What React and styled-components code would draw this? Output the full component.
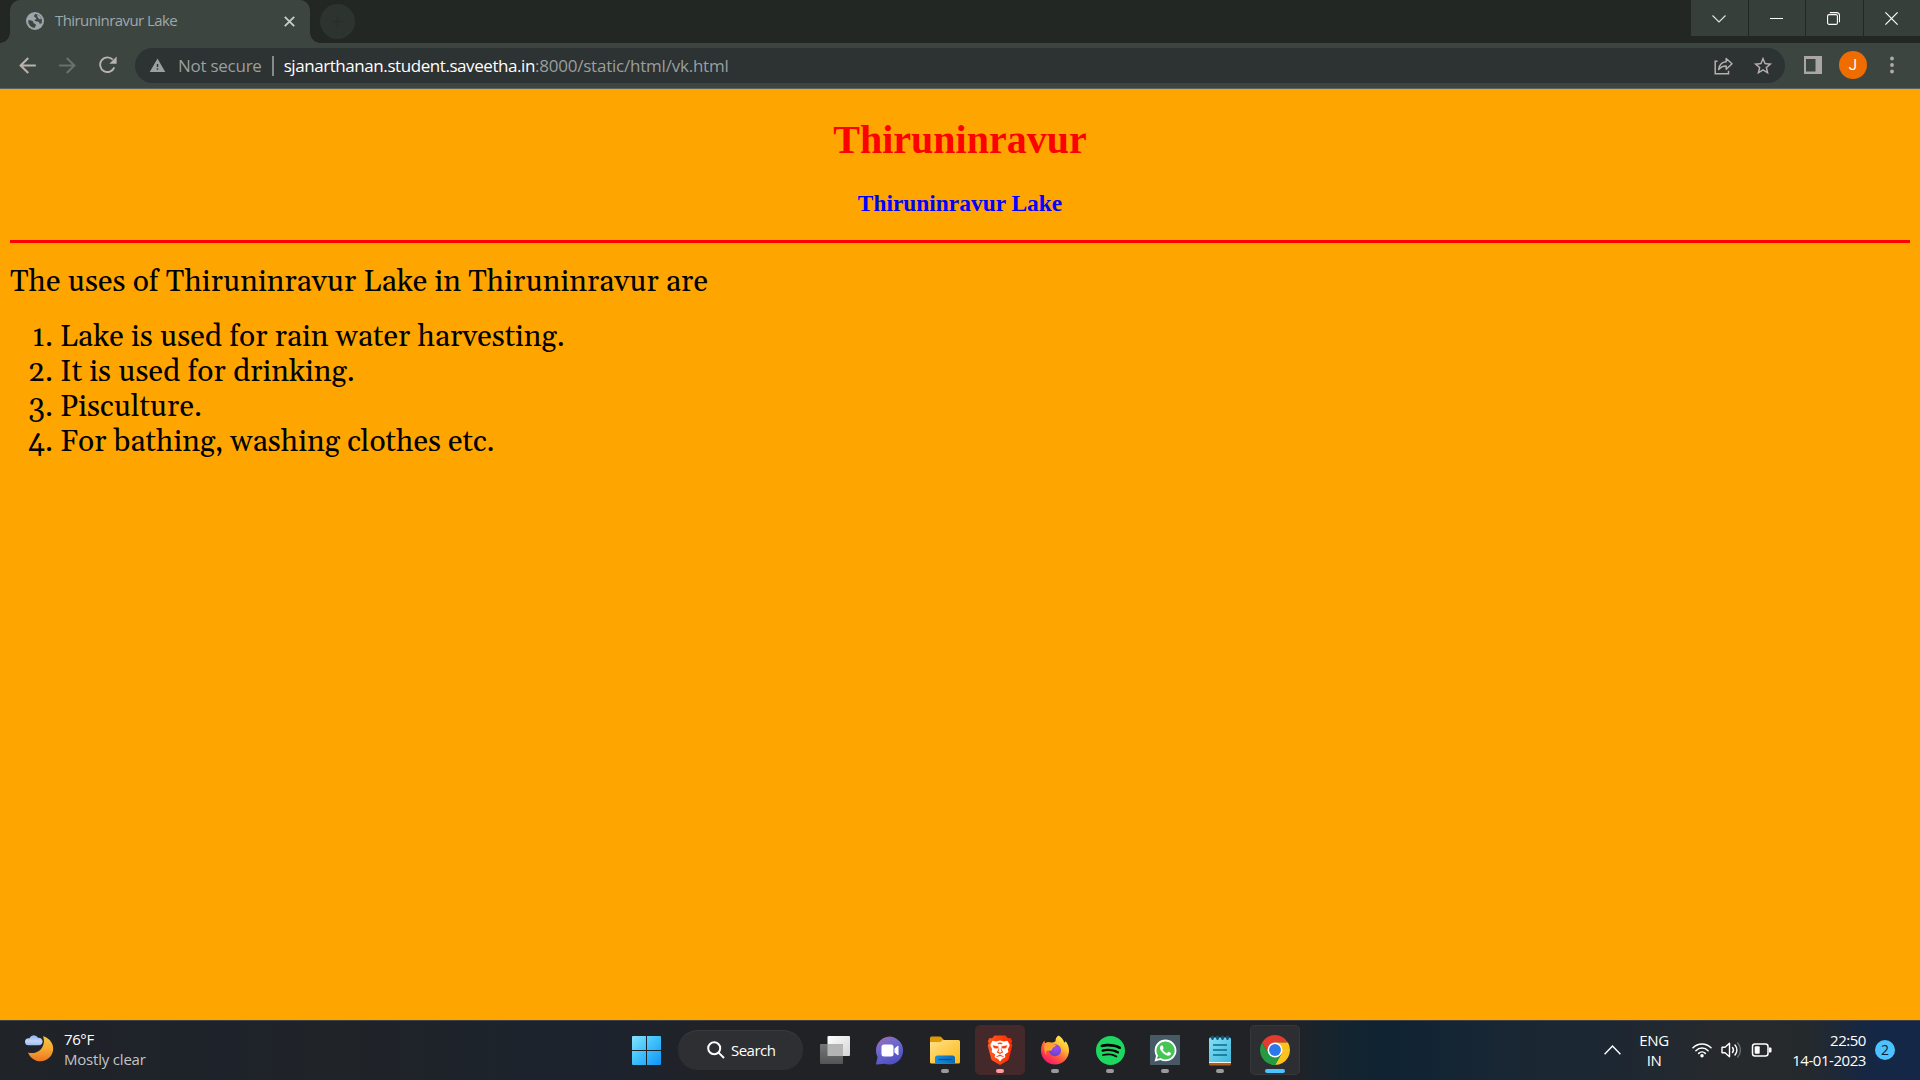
import React from "react";
import styled, { createGlobalStyle } from "styled-components";
import {
  MdArrowBack,
  MdArrowForward,
  MdStarBorder,
  MdWarning,
} from "react-icons/md";
import { SiSpotify } from "react-icons/si";
import { FaWhatsapp } from "react-icons/fa";

const uiFont = `"Segoe UI", "Open Sans", "Noto Sans", sans-serif`;

const GlobalStyle = createGlobalStyle`
  * { box-sizing: border-box; }
  body { margin: 0; overflow: hidden; }
  svg { display: block; flex: none; }
`;

const Screen = styled.div`
  width: 1920px;
  height: 1080px;
  display: flex;
  flex-direction: column;
  overflow: hidden;
  background: orange;
  font-family: ${uiFont};
`;

/* Browser chrome */

const TabStrip = styled.header`
  height: 43px;
  flex: none;
  display: flex;
  align-items: flex-start;
  padding-left: 10px;
  background: #222724;
`;

const Tab = styled.div`
  position: relative;
  width: 300px;
  height: 43px;
  display: flex;
  align-items: center;
  padding: 0 15px 1px 16px;
  border-radius: 10px 10px 0 0;
  background: #3c4540;
  color: #9fa8ac;

  &::before,
  &::after {
    content: "";
    position: absolute;
    bottom: 0;
    width: 10px;
    height: 10px;
  }
  &::before {
    left: -10px;
    background: radial-gradient(circle at 0 0, transparent 9.5px, #3c4540 10px);
  }
  &::after {
    right: -10px;
    background: radial-gradient(circle at 100% 0, transparent 9.5px, #3c4540 10px);
  }
`;

const TabTitle = styled.span`
  flex: 1;
  margin: 0 0 2px 11px;
  font-size: 15px;
  line-height: 20px;
  letter-spacing: -0.57px;
  white-space: nowrap;
`;

const NewTab = styled.div`
  width: 35px;
  height: 35px;
  margin: 4px 0 0 10px;
  display: grid;
  place-items: center;
  border-radius: 50%;
  background: #2d3430;
`;

const WindowButtons = styled.div`
  margin-left: auto;
  display: flex;
  gap: 1px;
`;

const WindowButton = styled.div`
  width: ${(p) => p.$width}px;
  height: 36px;
  display: grid;
  place-items: center;
  padding: 1px 2px 0 0;
  background: #363f3a;
`;

const Toolbar = styled.div`
  height: 46px;
  flex: none;
  display: flex;
  align-items: center;
  padding: 0 16px 0 15px;
  border-bottom: 1px solid #5a625e;
  background: #3c4540;
`;

const NavButton = styled.div`
  width: 40px;
  height: 40px;
  display: flex;
  align-items: center;
  padding-bottom: 1px;
  color: ${(p) => (p.$disabled ? "#6b716d" : "#b9b3ae")};
`;

const AddressBar = styled.div`
  width: 1650px;
  height: 35px;
  display: flex;
  align-items: center;
  padding: 0 11px 0 14px;
  border-radius: 18px;
  background: #2d3232;
  color: #9a9f9f;
  font-size: 17px;
  line-height: 24px;
  white-space: nowrap;
`;

const Security = styled.span`
  margin-left: 12px;
  letter-spacing: -0.26px;
`;

const Divider = styled.span`
  width: 2px;
  height: 20px;
  margin: 0 10px 0 10px;
  background: #858989;
`;

const Host = styled.span`
  color: #fff;
  letter-spacing: -0.43px;
`;

const Path = styled.span`
  letter-spacing: -0.22px;
`;

const AddressActions = styled.div`
  margin-left: auto;
  display: flex;
  align-items: center;
  gap: 18px;
  color: #b5b0ad;
`;

const ToolbarActions = styled.div`
  flex: 1;
  display: flex;
  align-items: center;
  padding: 0 0 1px 19px;
`;

const Avatar = styled.div`
  width: 28px;
  height: 28px;
  margin: 0 23px 0 17px;
  border-radius: 50%;
  background: #ef6c00;
  color: #fff;
  font: 400 15px/28px Roboto, sans-serif;
  text-align: center;
`;

/* Page */

const Page = styled.main`
  flex: 1;
  padding: 0 10px;
  background: orange;
  color: #000;
  overflow: hidden;
`;

const Title = styled.h1`
  margin: 28px 0 26px;
  color: red;
  font: bold 40px/46px "Liberation Serif", serif;
  text-align: center;
`;

const Subtitle = styled.h3`
  margin: 0 0 23px;
  color: blue;
  font: bold 23.4px/28px "Liberation Serif", serif;
  text-align: center;
`;

const Rule = styled.hr`
  height: 3px;
  margin: 0;
  border: 0;
  background: red;
`;

const Intro = styled.p`
  margin: 22px 0 20px;
  font: 30px/35px Gelasio, Georgia, "Liberation Serif", serif;
`;

const Uses = styled.ol`
  margin: 0;
  padding: 0;
  list-style: none;
  font: 30px/35px Gelasio, Georgia, "Liberation Serif", serif;
`;

const Use = styled.li`
  display: flex;
`;

const Marker = styled.span`
  width: 50px;
  padding-right: 7px;
  text-align: right;
  font-variant-numeric: oldstyle-nums;
`;

/* Taskbar */

const Taskbar = styled.footer`
  height: 60px;
  flex: none;
  display: grid;
  grid-template-columns: 621px 1fr 340px;
  border-top: 1px solid #3e4147;
  background: linear-gradient(
    90deg,
    #202328 0,
    #1e232b 220px,
    #202328 330px,
    #1c232e 600px,
    #212226 720px,
    #212226 1290px,
    #14242f 1340px,
    #0f2333 1390px,
    #1a2733 1520px,
    #1c2733 1600px,
    #272a2c 1730px,
    #24292d 1810px,
    #152745 1870px,
    #142747 1920px
  );
  color: #fff;
  font-size: 15px;
`;

const Weather = styled.div`
  display: flex;
  padding: 8px 0 0 24px;
  gap: 10px;
`;

const WeatherGlyph = styled.div`
  padding-top: 4px;
`;

const WeatherText = styled.div`
  display: flex;
  flex-direction: column;
  line-height: 20px;
  letter-spacing: -0.4px;
`;

const Muted = styled.span`
  color: #c3c3c5;
  letter-spacing: -0.2px;
`;

const Apps = styled.div`
  display: flex;
  align-items: center;
  gap: 5px;
`;

const AppButton = styled.div`
  width: 50px;
  height: 50px;
  margin-top: -1px;
  display: grid;
  grid-template-rows: 44px 6px;
  justify-items: center;
  align-items: center;
  border-radius: 5px;
  background: ${(p) => p.$tint || "transparent"};
  box-shadow: ${(p) => (p.$active ? "inset 0 0 0 1px #36373b" : "none")};
`;

const IconBox = styled.div`
  display: grid;
  place-items: center;
  padding-top: 6px;
`;

const Indicator = styled.span`
  width: ${(p) => (p.$wide ? 20 : 8)}px;
  height: 4px;
  margin-top: -2px;
  border-radius: 2px;
  background: ${(p) => p.$color};
`;

const Search = styled.div`
  width: 125px;
  height: 40px;
  margin: -1px 2px 0;
  display: flex;
  align-items: center;
  gap: 6px;
  padding: 0 0 0 29px;
  border-radius: 20px;
  background: #2e2f33;
  box-shadow: inset 0 1px 0 #393a3e;
  letter-spacing: -0.52px;
`;

const Tray = styled.div`
  display: flex;
  align-items: center;
  padding: 0 25px 1px 24px;
  line-height: 20px;
`;

const Language = styled.div`
  width: 30px;
  margin: 0 0 1px 18px;
  text-align: center;
  letter-spacing: -0.4px;
`;

const StatusIcons = styled.div`
  margin-left: 23px;
  display: flex;
  align-items: center;
  gap: 9px;
`;

const Clock = styled.div`
  margin: 0 0 1px auto;
  text-align: right;
  letter-spacing: -0.45px;
`;

const Badge = styled.div`
  width: 20px;
  height: 20px;
  margin-left: 9px;
  border-radius: 50%;
  background: #4cc2ff;
  color: #10202c;
  font-size: 14px;
  line-height: 19px;
  text-align: center;
`;

/* Icons */

const GlobeIcon = () => (
  <svg width="18" height="18" viewBox="0 0 18 18">
    <circle cx="9" cy="9" r="9" fill="#9da5aa" />
    <path fill="#3c4540" d="M9.300 2.100c-.9.900-1.600 1.700-1 2.600.5.800 1.800.4 2 1.500.2 1.300-1.400 1.100-1.700 2.100-.2.900.8 1.100 2 1.100 1.600 0 2.900.6 2.700 2.200l2 .2A6.900 6.900 0 0 0 9.300 2.100z" opacity=".95" />
    <path fill="#9da5aa" d="M11 2.800c1.700.3 3.500 1.800 4.200 3.700-.8.900-2 .8-2.500 0-.5-1-1.700-1.700-1.700-3.700z" />
    <path fill="#3c4540" d="M2.200 8.200c1.500-.2 3.500 0 4.600 1 .8.900.4 1.900 1.500 2.300 1 .3 1.800.7 1.500 1.900-.3 1-1 1.300-1.100 2.500A6.900 6.900 0 0 1 2.200 8.200z" />
  </svg>
);

const CloseTab = () => (
  <svg width="11" height="11" viewBox="0 0 11 11" stroke="#c6cbcb" strokeWidth="1.900">
    <path d="m.8.8 9.400 9.400M10.200.8.8 10.200" />
  </svg>
);

const PlusIcon = () => (
  <svg width="13" height="13" viewBox="0 0 13 13" stroke="#29302c" strokeWidth="2">
    <path d="M6.500 0v13M0 6.500h13" />
  </svg>
);

const ReloadIcon = () => (
  <svg width="19" height="18" viewBox="0 0 19 18">
    <path d="M15.300 11.300A7.300 7.300 0 1 1 13.800 3.700" fill="none" stroke="currentColor" strokeWidth="1.900" />
    <path d="M17.600.6v7.200h-7.200z" fill="currentColor" />
  </svg>
);

const ChevronDown = () => (
  <svg width="14" height="8" viewBox="0 0 14 8" fill="none" stroke="#e4e6e5" strokeWidth="1.100">
    <path d="M.5.5 7 7 13.500.5" />
  </svg>
);

const Minimize = () => (
  <svg width="13" height="1" viewBox="0 0 13 1">
    <path d="M0 0h13v1H0z" fill="#fff" />
  </svg>
);

const Restore = () => (
  <svg width="13" height="13" viewBox="0 0 13 13" fill="none" stroke="#fff" strokeWidth="1.100">
    <rect x=".6" y="2.600" width="9.800" height="9.800" rx="1.500" />
    <path d="M2.800.6h7a2.700 2.700 0 0 1 2.700 2.700v7" />
  </svg>
);

const CloseWindow = () => (
  <svg width="13" height="13" viewBox="0 0 13 13" stroke="#fff" strokeWidth="1.200">
    <path d="m.4.4 12.200 12.200M12.600.4.4 12.600" />
  </svg>
);

const ShareIcon = () => (
  <svg width="20" height="18" viewBox="0 0 20 18" fill="none" stroke="currentColor" strokeWidth="1.500">
    <path d="M3.500 4.300H1.200v12.500h13.300v-3" />
    <path d="M12.200 1.500v3.200C7.700 5 5.200 8 4.600 12.600c1.900-2.600 4.300-3.700 7.600-3.700v3.300L18 6.700z" strokeLinejoin="round" />
  </svg>
);

const SidePanelIcon = () => (
  <svg width="18" height="18" viewBox="0 0 18 18" fill="#aaa6a6">
    <path fillRule="evenodd" d="M0 0h18v18H0zM2 3v12.500h9.500V3z" />
  </svg>
);

const MenuDots = () => (
  <svg width="4" height="18" viewBox="0 0 4 18" fill="#b0aaa8">
    <circle cx="2" cy="2.500" r="1.900" />
    <circle cx="2" cy="9" r="1.900" />
    <circle cx="2" cy="15.500" r="1.900" />
  </svg>
);

const WeatherIcon = () => (
  <svg width="30" height="30" viewBox="0 0 30 30">
    <defs>
      <linearGradient id="moon" x1="0" y1="0" x2="0" y2="1">
        <stop offset="0" stopColor="#f5c63c" />
        <stop offset=".5" stopColor="#f6a932" />
        <stop offset="1" stopColor="#ee7420" />
      </linearGradient>
      <linearGradient id="cloud" x1="0" y1="0" x2="0" y2="1">
        <stop offset="0" stopColor="#8fb2ee" />
        <stop offset=".6" stopColor="#c3d5f6" />
        <stop offset="1" stopColor="#9fbdf0" />
      </linearGradient>
    </defs>
    <path fill="url(#moon)" d="M19 3.200c5 .9 10.200 6 10.200 12.300 0 7.200-5.700 12.700-12.700 12.700-5.700 0-10.700-3.700-12.500-8.800 4 1.300 9 .5 12.200-2.500 3.700-3.400 4.700-9 2.800-13.700z" />
    <path fill="url(#cloud)" d="M4.500 12.200a3.500 3.500 0 0 1 0-7c.3 0 .6 0 .9.100A4.700 4.700 0 0 1 14 4.700c2.600-.3 4.600 1.500 4.600 3.800 0 2.100-1.500 3.700-3.700 3.700z" />
  </svg>
);

const StartIcon = () => (
  <svg width="30" height="30" viewBox="0 0 30 30">
    <defs>
      <linearGradient id="start" x1="0" y1="0" x2="30" y2="30" gradientUnits="userSpaceOnUse">
        <stop offset="0" stopColor="#8be4ff" />
        <stop offset=".5" stopColor="#3fc0fb" />
        <stop offset="1" stopColor="#0f94f8" />
      </linearGradient>
    </defs>
    <path fill="url(#start)" d="M2 1h13v14H1V2a1 1 0 0 1 1-1zM16 1h13a1 1 0 0 1 1 1v13H16zM1 16h14v14H2a1 1 0 0 1-1-1zM16 16h14v13a1 1 0 0 1-1 1H16z" />
  </svg>
);

const SearchIcon = () => (
  <svg width="18" height="18" viewBox="0 0 18 18" fill="none" stroke="#fff" strokeWidth="2">
    <circle cx="7.200" cy="7.200" r="6" />
    <path d="m11.600 11.600 5.400 5.400" />
  </svg>
);

const TaskViewIcon = () => (
  <svg width="30" height="28" viewBox="0 0 30 28">
    <defs>
      <linearGradient id="tvFront" x1="0" y1="0" x2="1" y2="1">
        <stop offset="0" stopColor="#fff" />
        <stop offset="1" stopColor="#d4d4d4" />
      </linearGradient>
      <linearGradient id="tvBack" x1="0" y1="0" x2="0" y2="1">
        <stop offset="0" stopColor="#767676" />
        <stop offset="1" stopColor="#555" />
      </linearGradient>
    </defs>
    <rect x="7.500" width="22.500" height="20" rx="1" fill="url(#tvFront)" />
    <rect y="8" width="23" height="20" rx="1" fill="url(#tvBack)" />
    <path d="M7.500 8H22a1 1 0 0 1 1 1v11H7.500z" fill="#b4b4b4" />
  </svg>
);

const ChatIcon = () => (
  <svg width="30" height="29" viewBox="0 0 30 29">
    <defs>
      <linearGradient id="chat" x1=".1" y1="0" x2=".6" y2="1">
        <stop offset="0" stopColor="#a06cb4" />
        <stop offset=".45" stopColor="#6b68cf" />
        <stop offset="1" stopColor="#4f4fc4" />
      </linearGradient>
    </defs>
    <path fill="url(#chat)" d="M15 .5a14 14 0 1 1-5.500 27.200L2 28.600c-.7.100-1.100-.4-.9-1l1.500-6.500A14 14 0 0 1 15 .5z" />
    <rect x="6.500" y="8.500" width="12" height="12" rx="2.500" fill="#fff" />
    <path fill="#fff" d="m19.500 12.500 3-2.500c.5-.4 1-.1 1 .5v8c0 .6-.5.900-1 .5l-3-2.500z" />
  </svg>
);

const FolderIcon = () => (
  <svg width="30" height="28" viewBox="0 0 30 28">
    <defs>
      <linearGradient id="folder" x1="0" y1="0" x2="1" y2="1">
        <stop offset="0" stopColor="#ffe08a" />
        <stop offset="1" stopColor="#fdb913" />
      </linearGradient>
      <linearGradient id="folderTray" x1="0" y1="0" x2="1" y2="0">
        <stop offset="0" stopColor="#1490df" />
        <stop offset="1" stopColor="#0b68b8" />
      </linearGradient>
    </defs>
    <path fill="#e09a05" d="M0 2a1.500 1.500 0 0 1 1.500-1.500h8.200c.6 0 1 .2 1.400.6L14 4v5H0z" />
    <path fill="url(#folder)" d="M0 6h9.700c.6 0 1-.2 1.400-.6l1.500-1.400H28.500A1.500 1.500 0 0 1 30 5.500V26a1.500 1.500 0 0 1-1.500 1.500h-27A1.500 1.500 0 0 1 0 26z" />
    <path fill="url(#folderTray)" d="M5 27.500V22a2.500 2.500 0 0 1 2.500-2.500h15A2.500 2.500 0 0 1 25 22v5.500z" />
    <path stroke="#0a4c8c" strokeWidth="1.200" d="M8.500 23.500h13" />
  </svg>
);

const BraveIcon = () => (
  <svg width="26" height="30" viewBox="0 0 26 30">
    <defs>
      <linearGradient id="brave" x1="0" y1="0" x2="1" y2="0">
        <stop offset="0" stopColor="#ff5a1f" />
        <stop offset="1" stopColor="#ff2a00" />
      </linearGradient>
    </defs>
    <path fill="url(#brave)" d="M7.500.5h11L21 3.300l2.500-.3L25.200 6l-.9 2 1 2.500-3.300 12.700c-.4 1.400-1 2.100-2.100 2.900L13 30l-6.900-3.900C5 25.300 4.400 24.600 4 23.200L.7 10.500 1.700 8l-.9-2L2.500 3l2.500.3z" />
    <path fill="#fff" d="m5.500 5.800 3.600.7 3.900-1 3.900 1 3.600-.7 2.300 4.500-1.900 4 .5 2.700-3.600 2.600.6 2.600-3.400 1.700-2 2.600-2-2.600-3.400-1.700.6-2.600-3.600-2.600.5-2.700-1.900-4z" />
    <path fill="#fb4112" d="m5.500 10.300 5.400.9.300 1.300-.8 1-3.300-.3zM20.500 10.300l-5.400.9-.3 1.300.8 1 3.300-.3zM10.300 8l2.700-.6 2.700.6-1.600 1.300.5 5.500 1.700 2.400-3.300 1.700-3.300-1.700 1.700-2.400.5-5.500z" />
    <path fill="#fff" d="m11.800 9.300 1.200-.4 1.200.4-.4 5.500 1 2-1.800.9-1.800-.9 1-2z" />
    <path fill="#fb4112" d="m9.200 21.400 3.800-1.800 3.800 1.800-.5.700-3.300-1.200-3.300 1.200z" />
  </svg>
);

const FirefoxIcon = () => (
  <svg width="30" height="30" viewBox="0 0 30 30">
    <defs>
      <linearGradient id="fox" x1=".85" y1=".05" x2=".2" y2=".95">
        <stop offset="0" stopColor="#fff14d" />
        <stop offset=".3" stopColor="#ffc133" />
        <stop offset=".55" stopColor="#ff7139" />
        <stop offset=".8" stopColor="#ff3750" />
        <stop offset="1" stopColor="#ee1a6b" />
      </linearGradient>
      <linearGradient id="foxHead" x1="0" y1="0" x2="1" y2="1">
        <stop offset="0" stopColor="#ff9a2e" />
        <stop offset="1" stopColor="#ffb02a" />
      </linearGradient>
      <radialGradient id="foxGlobe" cx=".6" cy=".3" r=".8">
        <stop offset="0" stopColor="#a14bf0" />
        <stop offset="1" stopColor="#5a45c8" />
      </radialGradient>
    </defs>
    <path fill="url(#fox)" d="M18.500.5c2.600 1.400 5.200 4.500 5.700 6.900 1-.2 1.300-.8 1.300-1.400 2 2.500 3.500 5.900 3.500 9.500A14 14 0 0 1 15 29.500 14 14 0 0 1 1 15.500C1 11 2.200 8 4.500 5.500c0 1.200.2 2 .7 2.700C6.800 7.200 8.700 7 10.300 7.400c1 .2 4.200 0 5.200-1.200C15.300 3.600 16.700 1.800 18.500.5z" />
    <circle cx="15" cy="15.200" r="6" fill="url(#foxGlobe)" />
    <path fill="url(#foxHead)" d="M5.200 8.200c2.300-1.400 5.500-1 7 1 1.400.2 3 .2 3.800.8-.2 1.500-2.500 2.200-3.300 3-.5.6-.2 1.900-1.500 2.400-1.600.7-2.900-.5-4 .2-1.300.8-1.400 3-.5 5C4.500 18.500 3.200 12 5.200 8.200z" />
  </svg>
);

const DiscStack = styled.div`
  display: grid;
  place-items: center;
  width: 30px;
  height: 30px;
  background: ${(p) => p.$plate || "transparent"};
  color: ${(p) => p.$color};

  > * {
    grid-area: 1 / 1;
  }
`;

const Disc = styled.span`
  width: ${(p) => p.$size}px;
  height: ${(p) => p.$size}px;
  border-radius: 50%;
  background: ${(p) => p.$fill};
`;

const SpotifyIcon = () => (
  <DiscStack $color="#1ed760">
    <Disc $size={26} $fill="#000" />
    <SiSpotify size={29} />
  </DiscStack>
);

const WhatsAppIcon = () => (
  <DiscStack $plate="#465a66" $color="#fff">
    <Disc $size={20} $fill="#45c554" />
    <FaWhatsapp size={25} />
  </DiscStack>
);

const NotepadIcon = () => (
  <svg width="24" height="31" viewBox="0 0 24 31">
    <defs>
      <linearGradient id="pad" x1="0" y1="0" x2="1" y2="1">
        <stop offset="0" stopColor="#85e0f5" />
        <stop offset="1" stopColor="#40b8dc" />
      </linearGradient>
    </defs>
    <path fill="#b55d16" d="M1 26h22v3a1.500 1.500 0 0 1-1.500 1.500h-19A1.500 1.500 0 0 1 1 29z" />
    <path fill="#f1f1f1" d="M1 25h22v3H1z" />
    <path fill="url(#pad)" d="M1 4a1.500 1.500 0 0 1 1.500-1.500h19A1.500 1.500 0 0 1 23 4v23H1z" />
    <path stroke="#0c6b8e" strokeWidth="1.700" d="M5 10h14M5 15h14M5 20h14" />
    <path stroke="#0f5674" strokeWidth="2.800" strokeLinecap="round" d="M4.500 2v1.500M9.500 2v1.500M14.500 2v1.500M19.500 2v1.500" />
  </svg>
);

const ChromeIcon = () => (
  <svg width="30" height="30" viewBox="0 0 48 48">
    <path fill="#e33b2e" d="M3.220 12A24 24 0 0 1 44.780 12L24 12 13.600 30z" />
    <path fill="#fcc31e" d="M44.780 12A24 24 0 0 1 24 48L34.400 30 24 12z" />
    <path fill="#249a41" d="M24 48A24 24 0 0 1 3.220 12L13.600 30 34.400 30z" />
    <circle cx="24" cy="24" r="12" fill="#fff" />
    <circle cx="24" cy="24" r="9.500" fill="#2a78ea" />
  </svg>
);

const ChevronUp = () => (
  <svg width="17" height="10" viewBox="0 0 17 10" fill="none" stroke="#fff" strokeWidth="1.400">
    <path d="M.6 9.200 8.500 1l7.900 8.200" />
  </svg>
);

const WifiIcon = () => (
  <svg width="20" height="16" viewBox="0 0 20 16" fill="none" stroke="#fff" strokeWidth="1.500" strokeLinecap="round">
    <path d="M1 5.800a12.500 12.500 0 0 1 18 0M3.900 8.700a8.500 8.500 0 0 1 12.200 0M6.700 11.400a4.700 4.700 0 0 1 6.600 0" />
    <circle cx="10" cy="13.700" r="1" fill="#fff" />
  </svg>
);

const VolumeIcon = () => (
  <svg width="21" height="18" viewBox="0 0 21 18" fill="none" stroke="#fff" strokeWidth="1.400" strokeLinecap="round" strokeLinejoin="round">
    <path d="M1 6.200h3l4.500-4v13.600l-4.500-4H1z" />
    <path d="M11.500 6.500a4 4 0 0 1 0 5M14 4a7.500 7.500 0 0 1 0 10" />
    <path d="M16.700 2a10.500 10.500 0 0 1 0 14" stroke="#6a7074" />
  </svg>
);

const BatteryIcon = () => (
  <svg width="21" height="14" viewBox="0 0 21 14">
    <rect x="1.500" y="1" width="15.500" height="12" rx="2.500" fill="none" stroke="#fff" strokeWidth="1.500" />
    <rect x="3.700" y="3.200" width="5" height="7.600" rx="1" fill="#fff" />
    <path d="M18 4.500h1.500a1 1 0 0 1 1 1v3a1 1 0 0 1-1 1H18z" fill="#fff" />
  </svg>
);

const uses = [
  "Lake is used for rain water harvesting.",
  "It is used for drinking.",
  "Pisculture.",
  "For bathing, washing clothes etc.",
];

const runningApps = [
  { name: "taskview", Icon: TaskViewIcon },
  { name: "chat", Icon: ChatIcon },
  { name: "explorer", Icon: FolderIcon, dot: "#9a9a9c" },
  { name: "brave", Icon: BraveIcon, dot: "#ff99a4", tint: "#452829" },
  { name: "firefox", Icon: FirefoxIcon, dot: "#9a9a9c" },
  { name: "spotify", Icon: SpotifyIcon, dot: "#9a9a9c" },
  { name: "whatsapp", Icon: WhatsAppIcon, dot: "#9a9a9c" },
  { name: "notepad", Icon: NotepadIcon, dot: "#9a9a9c" },
  { name: "chrome", Icon: ChromeIcon, dot: "#4cc2ff", tint: "#2d2e32", active: true },
];

export default function App() {
  return (
    <Screen>
      <GlobalStyle />
      <TabStrip>
        <Tab>
          <GlobeIcon />
          <TabTitle>Thiruninravur Lake</TabTitle>
          <CloseTab />
        </Tab>
        <NewTab><PlusIcon /></NewTab>
        <WindowButtons>
          <WindowButton $width={57}><ChevronDown /></WindowButton>
          <WindowButton $width={56}><Minimize /></WindowButton>
          <WindowButton $width={57}><Restore /></WindowButton>
          <WindowButton $width={56}><CloseWindow /></WindowButton>
        </WindowButtons>
      </TabStrip>

      <Toolbar>
        <NavButton><MdArrowBack size={25} /></NavButton>
        <NavButton $disabled><MdArrowForward size={25} /></NavButton>
        <NavButton><Reload /></NavButton>
        <AddressBar>
          <MdWarning size={17} />
          <Security>Not secure</Security>
          <Divider />
          <Host>sjanarthanan.student.saveetha.in</Host>
          <Path>:8000/static/html/vk.html</Path>
          <AddressActions>
            <ShareIcon />
            <MdStarBorder size={22} />
          </AddressActions>
        </AddressBar>
        <ToolbarActions>
          <SidePanelIcon />
          <Avatar>J</Avatar>
          <MenuDots />
        </ToolbarActions>
      </Toolbar>

      <Page>
        <Title>Thiruninravur</Title>
        <Subtitle>Thiruninravur Lake</Subtitle>
        <Rule />
        <Intro>The uses of Thiruninravur Lake in Thiruninravur are</Intro>
        <Uses>
          {uses.map((text, i) => (
            <Use key={text}>
              <Marker>{i + 1}.</Marker>
              {text}
            </Use>
          ))}
        </Uses>
      </Page>

      <Taskbar>
        <Weather>
          <WeatherGlyph><WeatherIcon /></WeatherGlyph>
          <WeatherText>
            <span>76°F</span>
            <Muted>Mostly clear</Muted>
          </WeatherText>
        </Weather>
        <Apps>
          <AppButton>
            <IconBox><StartIcon /></IconBox>
          </AppButton>
          <Search>
            <SearchIcon />
            Search
          </Search>
          {runningApps.map(({ name, Icon, dot, tint, active }) => (
            <AppButton key={name} $tint={tint} $active={active}>
              <IconBox><Icon /></IconBox>
              {dot && <Indicator $color={dot} $wide={active} />}
            </AppButton>
          ))}
        </Apps>
        <Tray>
          <ChevronUp />
          <Language>ENG IN</Language>
          <StatusIcons>
            <WifiIcon />
            <VolumeIcon />
            <BatteryIcon />
          </StatusIcons>
          <Clock>
            22:50
            <br />
            14-01-2023
          </Clock>
          <Badge>2</Badge>
        </Tray>
      </Taskbar>
    </Screen>
  );
}

const ReloadOffset = styled.span`
  padding-left: 4px;
`;

function Reload() {
  return (
    <ReloadOffset>
      <ReloadIcon />
    </ReloadOffset>
  );
}
